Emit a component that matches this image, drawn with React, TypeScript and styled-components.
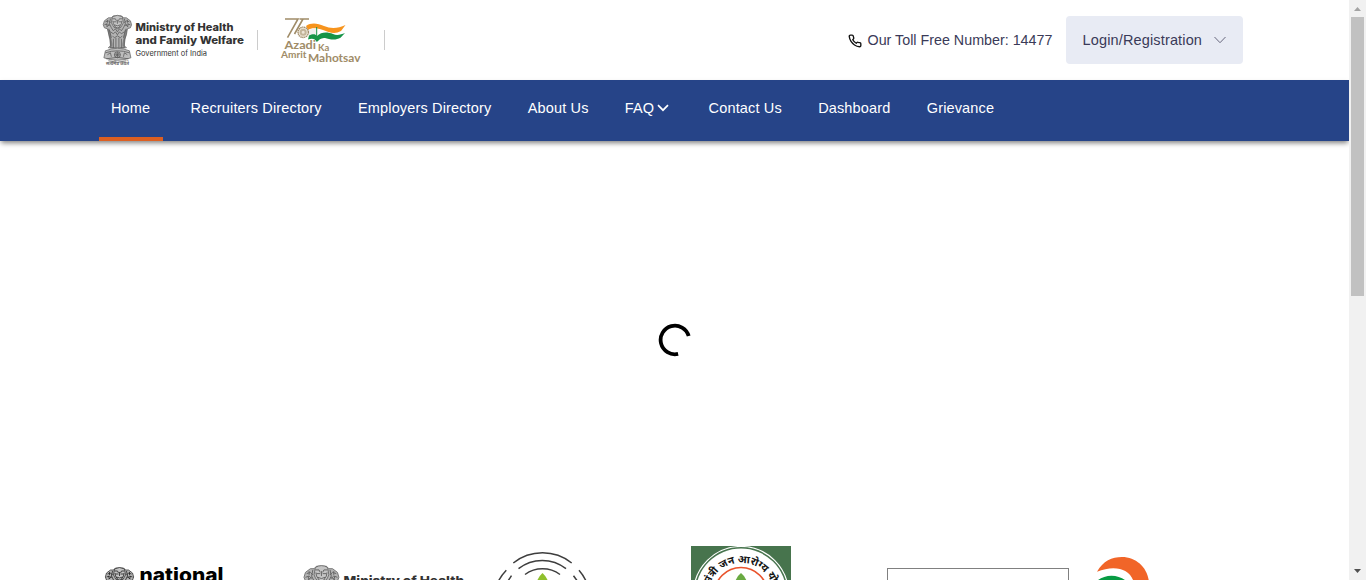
import React from "react";
import styled, { createGlobalStyle } from "styled-components";

const GlobalStyle = createGlobalStyle`
  * { box-sizing: border-box; }
  body { margin: 0; background: #fff; overflow: hidden; font-family: "Liberation Sans", Arial, sans-serif; }
`;

const Shell = styled.div`
  display: flex;
  width: 1366px;
  height: 580px;
  overflow: hidden;
`;
const Page = styled.div`
  display: flex;
  flex-direction: column;
  width: 1349px;
  height: 580px;
  overflow: hidden;
`;
const Header = styled.header`
  display: flex;
  align-items: center;
  flex: none;
  height: 80px;
  padding: 0 106px 0 102px;
`;
const Brand = styled.div`
  display: flex;
  align-items: center;
`;
const Divider = styled.span<{ $before: number; $after?: number }>`
  width: 1px;
  height: 20px;
  margin-left: ${(p) => p.$before}px;
  margin-right: ${(p) => p.$after ?? 0}px;
  background: #ccc;
`;
const TollFree = styled.div`
  display: flex;
  align-items: center;
  margin-left: auto;
  margin-right: 13.6px;
  gap: 5.4px;
  font-size: 14.3px;
  line-height: 20px;
  color: #3a3a58;
  white-space: nowrap;
  svg { margin-top: 2px; }
`;
const LoginButton = styled.button`
  display: flex;
  align-items: center;
  justify-content: space-between;
  width: 177px;
  height: 48px;
  padding: 0 17px 0 16.5px;
  border: 0;
  border-radius: 4px;
  background: #e8ebf4;
  color: #3a3a58;
  font: 14.5px "Liberation Sans", Arial, sans-serif;
  letter-spacing: 0.15px;
`;
const Nav = styled.nav`
  display: flex;
  flex: none;
  height: 61px;
  padding-left: 99px;
  background: #264488;
  box-shadow: 0 3px 5px -1px rgba(0, 0, 0, 0.5);
`;
const NavItem = styled.a<{ $active?: boolean }>`
  display: flex;
  align-items: flex-start;
  flex: none;
  height: 61px;
  padding: 18px 12px 0;
  margin-right: ${(p) => (p.$active ? 15.6 : 12.3)}px;
  width: ${(p) => (p.$active ? "64px" : "auto")};
  border-bottom: 4px solid ${(p) => (p.$active ? "#dc5f22" : "transparent")};
  color: #fff;
  font-size: 14.5px;
  line-height: 20px;
  letter-spacing: 0.15px;
  white-space: nowrap;
`;
const NavChevron = styled.svg`
  margin: 6px 3px 0 3px;
`;
const Loading = styled.main`
  display: flex;
  flex: none;
  justify-content: center;
  height: 404px;
  padding-top: 182px;
`;
const Partners = styled.footer`
  display: flex;
  flex: none;
  align-items: flex-start;
  height: 35px;
  padding-left: 104px;
  overflow: hidden;
`;
const PartnerLogo = styled.div<{ $width: number; $before?: number; $top?: number }>`
  flex: none;
  width: ${(p) => p.$width}px;
  margin-left: ${(p) => p.$before ?? 0}px;
  padding-top: ${(p) => p.$top ?? 0}px;
  svg { display: block; }
`;
const EmptyFrame = styled.div`
  flex: none;
  width: 182px;
  height: 60px;
  margin: 23px 0 0 96px;
  border: 1px solid #808080;
`;
const Scrollbar = styled.aside`
  display: flex;
  flex-direction: column;
  align-items: center;
  width: 17px;
  height: 580px;
  background: #f1f1f1;
`;
const Thumb = styled.div`
  width: 13px;
  height: 279px;
  background: #c1c1c1;
`;
const Arrow = styled.svg<{ $end?: boolean }>`
  display: block;
  flex: none;
  margin-top: ${(p) => (p.$end ? "auto" : 0)};
`;

/* Lion capital, drawn in a 30 x 52 box */
const Capital = ({ dark = "#5c5c5c" }: { dark?: string }) => (
  <g>
    <g fill="#b4b4b4" stroke={dark} strokeWidth=".7">
      <path d="M9 3 6 3 2 6 0.8 10 2 13 5 14 6.5 20 8 25 8 33H22L22 25 24 20 25 14 28 13 29.2 10 28 6 24 3 21 3 19 1H11Z" />
      <path d="M10 2Q15-1 20 2L21 8Q19 14 15 14T9 8Z" fill="#c4c4c4" />
      <path d="M3 36Q15 31 27 36L28.5 43Q15 48 1.5 43Z" fill="#bdbdbd" />
    </g>
    <g fill="none" stroke={dark} strokeWidth=".8">
      <path d="M10 4 13 4 14 6M20 4 17 4 16 6M11 7H14M16 7H19M15 5V9M12 10 15 11 18 10M12 12 15 13 18 12M10.5 6 11 9 13 12M19.5 6 19 9 17 12" />
      <path d="M3 7 6 6 8 8M2 10 5 9 7 11M27 7 24 6 22 8M28 10 25 9 23 11M4 12 7 10M26 12 23 10M8 4 7 9 9 13M22 4 23 9 21 13M5 5 5 8M25 5 25 8M4 9 5 12M26 9 25 12" />
      <path d="M9 13 11 16 13 14 15 17 17 14 19 16 21 13M8 17 11 19 13 17 15 20 17 17 19 19 22 17M10 21 12 23 15 21 18 23 20 21M11 24V33M13.5 23V33M16.5 23V33M19 24V33M7 15 9 23M23 15 21 23" />
      <path d="M8 31 6 33H12M22 31 24 33H18M3 38Q15 34 27 38M4 44Q15 41 26 44M5 40 8 38 9 42M25 40 22 38 21 42" />
      <circle cx="15" cy="40" r="3" />
      <path d="M12 40H18M15 37V43M13 38 17 42M17 38 13 42M6 46Q15 49 24 46" />
    </g>
    <path d="M5 14 7 14 10 29 10 32 8 32Z M25 14 23 14 20 29 20 32 22 32Z" fill="#555" opacity=".55" />
  </g>
);

const logoFont = 'Inter, "Liberation Sans", sans-serif';

const Ministry = () => (
  <svg width="144" height="52" viewBox="0 0 144 52">
    <g transform="translate(.4 .8)"><Capital /></g>
    <text x="4" y="51" fontSize="4.4" fontWeight="700" fill="#666" fontFamily='"Noto Sans Devanagari", "Noto Sans", sans-serif' textLength="23" lengthAdjust="spacingAndGlyphs">सत्यमेव जयते</text>
    <g fontFamily={logoFont} fill="#333">
      <text x="33.5" y="17.4" fontSize="10.2" fontWeight="800" textLength="98" lengthAdjust="spacingAndGlyphs">Ministry of Health</text>
      <text x="33.5" y="30.2" fontSize="10.2" fontWeight="800" textLength="108.5" lengthAdjust="spacingAndGlyphs">and Family Welfare</text>
      <text x="33.5" y="41.8" fontSize="7.4" textLength="71.5" lengthAdjust="spacingAndGlyphs">Government of India</text>
    </g>
  </svg>
);

const Azadi = () => (
  <svg width="82" height="50" viewBox="280 15 82 50">
    <path d="M306 26C311 22.5 317 23 324 26S338 28.5 345.5 25L341 31C335 34.5 329 32.5 323 30 316 27.5 311 28 308 30Z" fill="#f7941d" />
    <path d="M307.5 30.5Q312 28 316.5 29V34.5Q312 34.5 309 36Z" fill="#eee" />
    <path d="M309 35.5C313 33.5 315.5 34 317 36 321 32 327 31.5 333 34 337 36 341 34.5 345 33L340.5 37.8C335 41 329 39 325 38 321 37.5 319 40 316.8 42 315 38.5 312 38 308 39.5Z" fill="#159447" />
    <path d="M316.7 27V41" stroke="#159447" strokeWidth="1" />
    <g fill="none" stroke="#a08c68" strokeWidth="1.6">
      <path d="M285 19H298L287.5 37.7M299.5 19H309M303 19 294.5 34" />
      <circle cx="303.2" cy="32.3" r="5.2" strokeWidth="1.3" fill="#eee6d8" strokeDasharray="1.4 .5" />
      <circle cx="303.2" cy="32.3" r="2.5" strokeWidth="2" opacity=".55" />
    </g>
    <g fill="#a08c68" fontFamily="Lato, sans-serif" fontWeight="700">
      <text x="284.5" y="48.8" fontSize="11.5" textLength="31.5" lengthAdjust="spacingAndGlyphs">Azadi</text>
      <text x="318" y="51.3" fontSize="8.8" textLength="11.3" lengthAdjust="spacingAndGlyphs">Ka</text>
      <text x="281" y="58.4" fontSize="9.6" textLength="25.5" lengthAdjust="spacingAndGlyphs">Amrit</text>
      <text x="308" y="61.5" fontSize="10.8" textLength="52.5" lengthAdjust="spacingAndGlyphs">Mahotsav</text>
    </g>
  </svg>
);

const navItems = ["Home", "Recruiters Directory", "Employers Directory", "About Us", "FAQ", "Contact Us", "Dashboard", "Grievance"];

export default function App() {
  return (
    <Shell>
      <GlobalStyle />
      <Page>
        <Header>
          <Brand>
            <Ministry />
            <Divider $before={11} $after={22} />
            <Azadi />
            <Divider $before={22} />
          </Brand>
          <TollFree>
            <svg width="14" height="14" viewBox="0 0 24 24" fill="none" stroke="#111" strokeWidth="2.3" strokeLinecap="round" strokeLinejoin="round">
              <path d="M22 16.9v3a2 2 0 0 1-2.2 2 19.8 19.8 0 0 1-8.6-3.1 19.5 19.5 0 0 1-6-6A19.8 19.8 0 0 1 2.1 4.2 2 2 0 0 1 4.1 2h3a2 2 0 0 1 2 1.7c.1 1 .4 1.9.7 2.8a2 2 0 0 1-.5 2.1L8.1 9.9a16 16 0 0 0 6 6l1.3-1.3a2 2 0 0 1 2.1-.4c.9.3 1.8.6 2.8.7A2 2 0 0 1 22 16.9z" />
            </svg>
            Our Toll Free Number: 14477
          </TollFree>
          <LoginButton>
            Login/Registration
            <svg width="12" height="8" viewBox="0 0 12 8" fill="none" stroke="#66667c" strokeWidth="1">
              <path d="M.5 1 6 6.7 11.5 1" />
            </svg>
          </LoginButton>
        </Header>
        <Nav>
          {navItems.map((name) => (
            <NavItem key={name} $active={name === "Home"}>
              {name}
              {name === "FAQ" && (
                <NavChevron width="12" height="9" viewBox="0 0 12 9" fill="none" stroke="#fff" strokeWidth="1.7">
                  <path d="M1 1.2 6 6.2 11 1.2" />
                </NavChevron>
              )}
            </NavItem>
          ))}
        </Nav>
        <Loading>
          <svg width="34" height="34" viewBox="0 0 34 34">
            <path d="M30.7 13.1A14.3 14.3 0 1 0 20.1 30.9" fill="none" stroke="#000" strokeWidth="3.8" />
          </svg>
        </Loading>
        <Partners>
          <PartnerLogo $width={121} $top={22}>
            <svg width="121" height="60" viewBox="0 0 121 60">
              <g transform="translate(.5 0)"><Capital dark="#222" /></g>
              <text x="35.5" y="15" fontFamily={logoFont} fontSize="19.5" fontWeight="800" textLength="84" lengthAdjust="spacingAndGlyphs">national</text>
            </svg>
          </PartnerLogo>
          <PartnerLogo $width={164} $before={77} $top={20}>
            <svg width="164" height="60" viewBox="0 0 164 60">
              <g transform="translate(1 0) scale(1.23)"><Capital dark="#666" /></g>
              <text x="41.5" y="20.3" fontFamily={logoFont} fontSize="12" fontWeight="800" fill="#333" textLength="120.5" lengthAdjust="spacingAndGlyphs">Ministry of Health</text>
            </svg>
          </PartnerLogo>
          <PartnerLogo $width={94} $before={29}>
            <svg width="94" height="36" viewBox="495 545 94 36">
              <g fill="none" stroke="#3e3e3e" strokeWidth="1.5">
                <path d="M513.3 563A47 47 0 0 1 571.7 563M518.5 568.7A38.5 38.5 0 0 1 566 568.7M525 574.5A30 30 0 0 1 560 574.5M506.3 570.3A47 47 0 0 0 498.5 581M579 570.3A47 47 0 0 1 586 581M511.5 575.7 508 581M573.5 575.7 577.3 581" />
              </g>
              <path d="M542.5 573Q546 576 548 581H537Q539 576 542.5 573Z" fill="#8fc02d" />
            </svg>
          </PartnerLogo>
          <PartnerLogo $width={100} $before={102} $top={1}>
            <svg width="100" height="100" viewBox="0 0 100 100">
              <defs><path id="ring" d="M18.6 62A33.5 33.5 0 1 1 81.4 62" /></defs>
              <rect width="100" height="100" fill="#47744d" />
              <circle cx="50" cy="48" r="47.5" fill="none" stroke="#fff" strokeWidth="1.2" />
              <circle cx="50" cy="48" r="45.5" fill="#fff" />
              <circle cx="50" cy="48" r="26.5" fill="none" stroke="#e9532c" strokeWidth="1.7" />
              <path d="M50 27Q54 30 56 36H44Q46 30 50 27Z" fill="#69aa42" />
              <text fontFamily='"Noto Sans Devanagari", "Noto Sans", sans-serif' fontSize="10.6" fontWeight="700" fill="#161616" textAnchor="middle">
                <textPath href="#ring" startOffset="47.5%">प्रधानमंत्री जन आरोग्य योजना</textPath>
              </text>
            </svg>
          </PartnerLogo>
          <EmptyFrame />
          <PartnerLogo $width={56} $before={27} $top={11}>
            <svg width="56" height="48" viewBox="1096 556 56 48">
              <path d="M1097 571.8C1103 561 1112 557 1122 557 1137 557 1149 569 1149 584L1134 584C1132 569 1115 564 1097 571.8Z" fill="#f16528" />
              <ellipse cx="1111.5" cy="590" rx="19" ry="14.2" fill="#079b43" />
            </svg>
          </PartnerLogo>
        </Partners>
      </Page>
      <Scrollbar>
        <Arrow width="17" height="17" viewBox="0 0 17 17"><path d="M5 11 8.5 7 12 11Z" fill="#a3a3a3" /></Arrow>
        <Thumb />
        <Arrow $end width="17" height="17" viewBox="0 0 17 17"><path d="M5 6 8.5 10 12 6Z" fill="#505050" /></Arrow>
      </Scrollbar>
    </Shell>
  );
}
